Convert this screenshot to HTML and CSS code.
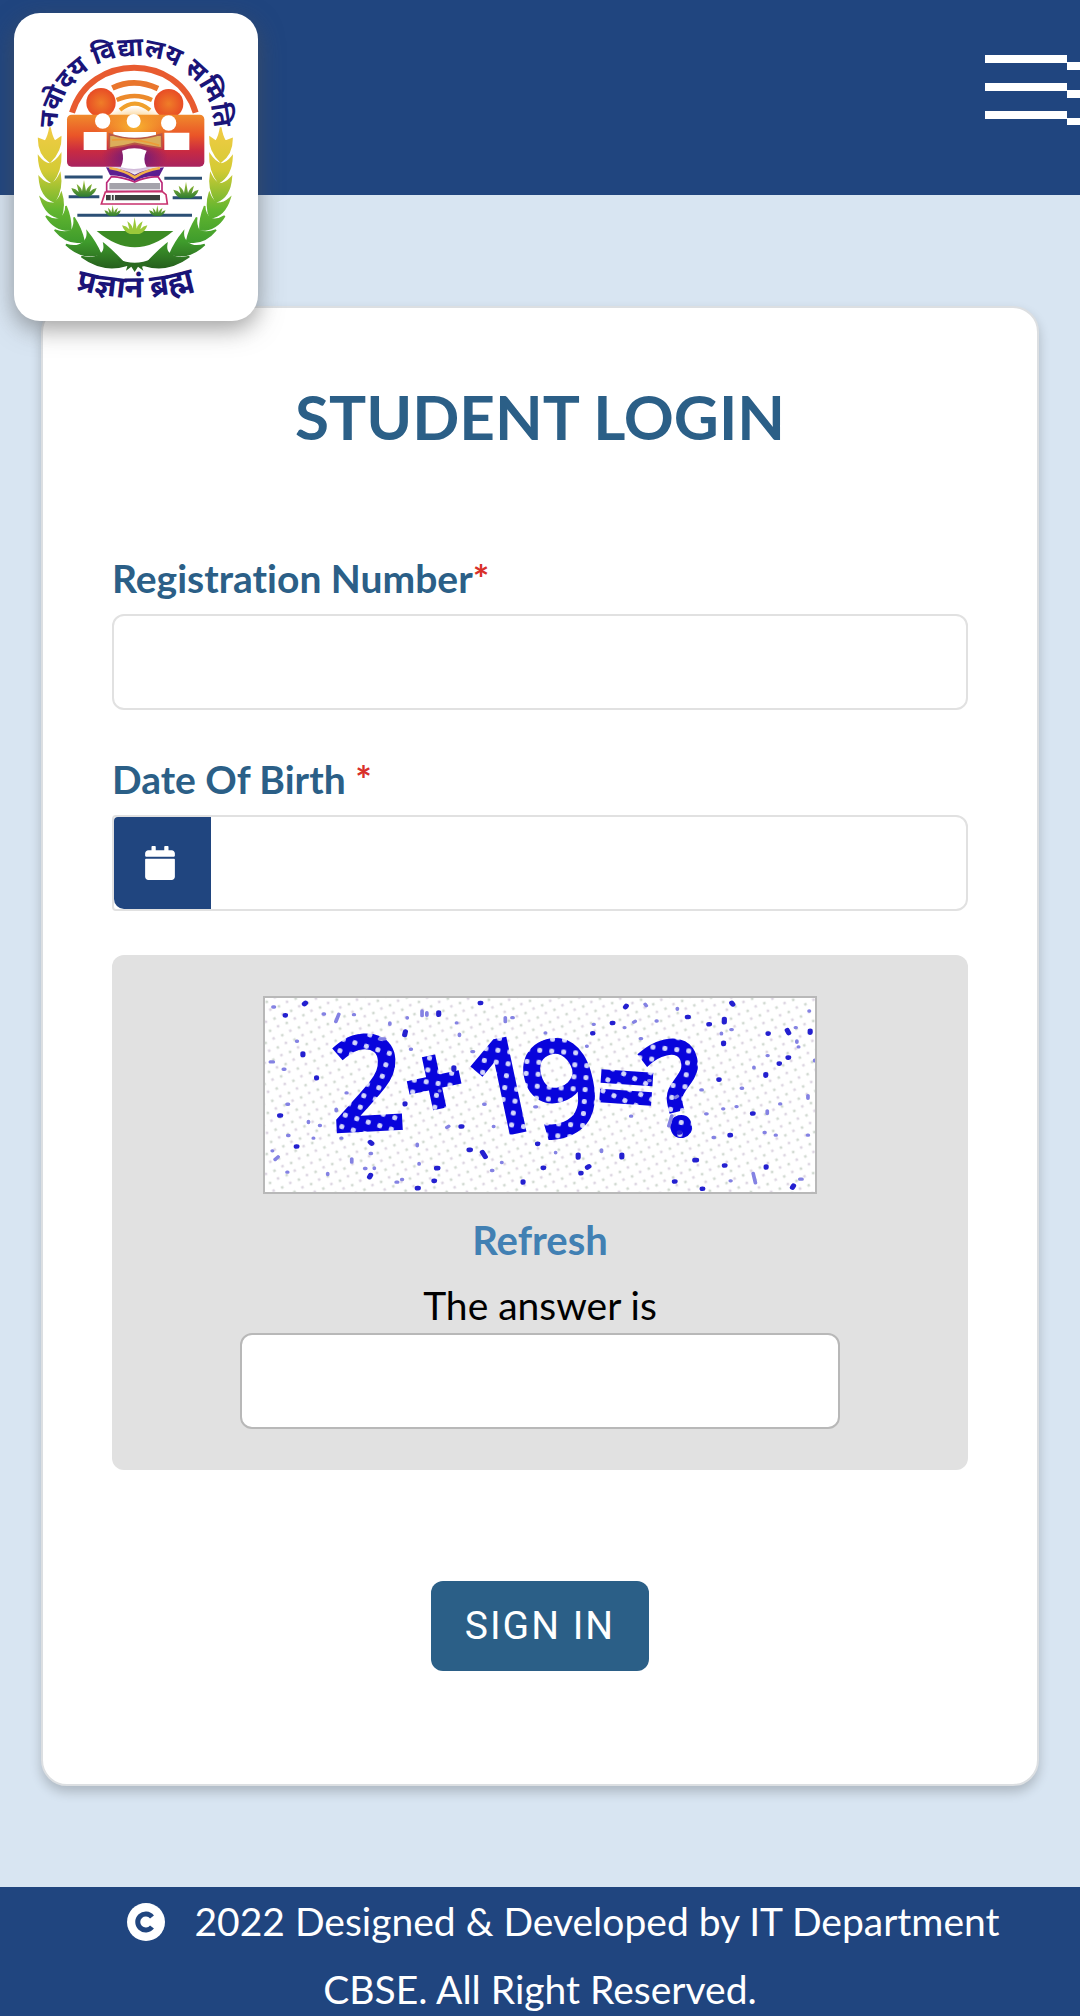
FILE: index.html
```html
<!DOCTYPE html>
<html lang="en">
<head>
  <meta charset="UTF-8" />
  <meta name="viewport" content="width=device-width, initial-scale=1.0"/>
  <title>Student Login</title>
  <link rel="stylesheet" href="styles.css">
</head>
<body>
  <header class="topbar">
    <a class="logo" href="#" aria-label="Home">
      <svg viewBox="42 39 732 924">
        <defs>
          <linearGradient id="fire" x1="0" y1="0" x2="0" y2="1">
            <stop offset="0" stop-color="#f08a2c"/>
            <stop offset=".4" stop-color="#ea5528"/>
            <stop offset=".7" stop-color="#c92a42"/>
            <stop offset="1" stop-color="#a8235f"/>
          </linearGradient>
          <radialGradient id="head">
            <stop offset="0" stop-color="#ef7d28"/>
            <stop offset="1" stop-color="#e84c25"/>
          </radialGradient>
          <radialGradient id="glow">
            <stop offset="0" stop-color="#f7b52f"/>
            <stop offset="1" stop-color="#f7a52f" stop-opacity="0"/>
          </radialGradient>
          <radialGradient id="plum">
            <stop offset="0" stop-color="#5a1685"/>
            <stop offset="1" stop-color="#6a1a80" stop-opacity="0"/>
          </radialGradient>
          <linearGradient id="wheat" gradientUnits="userSpaceOnUse" x1="0" y1="380" x2="0" y2="810">
            <stop offset="0" stop-color="#f2cb45"/>
            <stop offset=".3" stop-color="#d5cb35"/>
            <stop offset=".58" stop-color="#62b62f"/>
            <stop offset=".8" stop-color="#3f9c2c"/>
            <stop offset="1" stop-color="#245c1c"/>
          </linearGradient>
          <linearGradient id="plant" x1="0" y1="0" x2="0" y2="1">
            <stop offset="0" stop-color="#a9c935"/>
            <stop offset="1" stop-color="#2c7a32"/>
          </linearGradient>
          <path id="arcTop" d="M172 400 V378 A234 210 0 0 1 640 378 V400"/>
          <path id="arcBottom" d="M206 862 Q405 926 606 856"/>
          <path id="sprout" d="M-38 -14 Q-24 -12 -16 -2 L-22 -26 Q-8 -16 -6 -4 L0 -38 L6 -4 Q10 -18 24 -26 L17 -2 Q26 -12 38 -14 Q32 6 14 12 H-14 Q-32 6 -38 -14Z"/>
        </defs>

        <text class="motto"><textPath href="#arcTop" startOffset="50%">नवोदय विद्यालय समिति</textPath></text>
        <text class="motto motto-bottom"><textPath href="#arcBottom" startOffset="50%">प्रज्ञानं ब्रह्म</textPath></text>

        <!-- rising sun -->
        <g fill="none">
          <path d="M216 338 C270 158 535 158 587 338" stroke="#e85b30" stroke-width="18"/>
          <path d="M337 264 Q404 232 474 266" stroke="#e9762d" stroke-width="17"/>
          <path d="M350 300 Q404 276 456 300" stroke="#ec8a2b" stroke-width="13"/>
          <path d="M360 330 Q404 292 450 330" stroke="#f0a02c" stroke-width="12"/>
        </g>
        <circle cx="303" cy="308" r="44" fill="url(#head)"/>
        <circle cx="506" cy="311" r="44" fill="url(#head)"/>

        <!-- pupils -->
        <rect x="201" y="344" width="412" height="156" rx="14" fill="url(#fire)"/>
        <ellipse cx="404" cy="380" rx="120" ry="60" fill="url(#glow)"/>
        <ellipse cx="404" cy="470" rx="100" ry="55" fill="url(#plum)"/>
        <g fill="#fff">
          <circle cx="308" cy="363" r="23"/>
          <circle cx="401" cy="363" r="21"/>
          <circle cx="506" cy="369" r="23"/>
          <path d="M251 396 H320 V450 H251Z M493 398 H568 V450 H493Z M340 396 H468 V408 L404 420 L340 408Z"/>
        </g>
        <path d="M328 402 Q370 416 404 416 Q440 416 485 402 V444 Q440 438 404 430 Q370 440 328 444Z" fill="#dcae5a" stroke="#b95a45" stroke-width="5"/>
        <path d="M336 420 Q404 412 478 436" fill="none" stroke="#ed9c36" stroke-width="5"/>

        <!-- books -->
        <path d="M318 502 Q370 506 404 524 Q440 506 492 502 L478 528 Q434 526 404 544 Q372 526 330 526Z" fill="#5a1e90"/>
        <path d="M328 504 Q376 512 404 532 Q434 512 480 504" fill="none" stroke="#f3b24a" stroke-width="8"/>
        <path d="M366 452 Q403 438 440 452 Q426 478 440 502 Q403 512 362 502 Q374 478 366 452Z" fill="#fff"/>
        <path d="M334 530 L320 548 V574 H486 V548 L474 530 Q430 532 404 546 Q372 532 334 530Z" fill="#fff" stroke="#ba2878" stroke-width="5"/>
        <rect x="328" y="549" width="152" height="19" fill="#a5a3ab"/>
        <path d="M316 576 L304 612 H502 L498 584 L486 574Z" fill="#fff" stroke="#c8316d" stroke-width="5"/>
        <path d="M318 585 H480 V601 H318Z" fill="#3c403f"/>
        <path d="M334 585 V601 M343 585 V601" stroke="#e8e8e8" stroke-width="4"/>

        <!-- water and plants -->
        <path d="M194 531 H308 M493 535 H606 M206 590 H298 M518 593 H606 M232 646 H576" fill="none" stroke="#2b4f75" stroke-width="9"/>
        <use href="#sprout" x="252" y="578" fill="url(#plant)"/>
        <use href="#sprout" x="558" y="583" fill="url(#plant)"/>
        <use href="#sprout" transform="translate(338 640) scale(.65)" fill="url(#plant)"/>
        <use href="#sprout" transform="translate(472 640) scale(.65)" fill="url(#plant)"/>
        <path d="M290 693 H520 Q404 790 290 693Z" fill="#3c8b24"/>
        <use href="#sprout" x="404" y="690" fill="#9bc93a"/>

        <!-- wheat wreath -->
        <g fill="url(#wheat)" stroke="url(#wheat)" stroke-width="5" id="earLeft">
          <path d="M150 382 Q154 408 164 424 L182 412 Q184 452 150 486 Q116 462 116 416 L136 424 Q146 408 150 382Z"/>
          <path d="M116 470 Q132 490 148 492 Q168 486 182 464 Q184 510 156 548 Q118 526 116 470Z"/>
          <path d="M118 532 Q136 552 154 552 Q170 544 180 522 Q188 566 164 606 Q122 590 118 532Z"/>
          <path d="M122 594 Q142 612 162 610 Q178 598 184 580 Q196 616 182 654 Q138 648 122 594Z"/>
          <path d="M138 648 Q160 662 180 656 Q198 642 198 618 Q214 656 212 690 Q164 692 138 648Z"/>
          <path d="M164 690 Q192 702 214 692 Q226 676 222 652 Q246 690 252 724 Q202 736 164 690Z"/>
          <path d="M198 734 Q232 744 250 728 Q264 716 262 696 Q288 728 302 762 Q246 780 198 734Z"/>
          <path d="M244 770 Q280 780 302 762 Q316 754 312 732 Q346 760 378 796 Q310 818 244 770Z"/>
        </g>
        <use href="#earLeft" transform="translate(812 0) scale(-1 1)"/>
        <path d="M352 776 Q404 800 456 776 L440 796 L426 800 L430 812 L414 800 L404 816 L394 800 L378 812 L382 798 L366 796Z" fill="#2a6a20"/>
      </svg>
    </a>
    <button class="menu-btn" type="button" aria-label="Menu">
      <svg width="102" height="80" viewBox="0 0 102 80" stroke="#fff" stroke-width="8">
        <path d="M0 14H82M0 42H82M0 70H82"/>
        <path d="M82 21H102M82 49H102M82 77H102"/>
      </svg>
    </button>
  </header>

  <main class="content">
    <form class="card">
      <h1>STUDENT LOGIN</h1>

      <div class="field">
        <label for="regNo">Registration Number<span class="req">*</span></label>
        <input class="text-input" type="text" id="regNo" required>
      </div>

      <div class="field">
        <label for="dob">Date Of Birth <span class="req">*</span></label>
        <div class="date-group">
          <span class="date-icon">
            <svg width="30" height="34" viewBox="0 0 448 512" fill="#fff">
              <path d="M12 192h424c6.600 0 12 5.400 12 12v260c0 26.500-21.500 48-48 48H48c-26.500 0-48-21.500-48-48V204c0-6.600 5.400-12 12-12zm436-44v-36c0-26.500-21.500-48-48-48h-48V12c0-6.600-5.400-12-12-12h-40c-6.600 0-12 5.400-12 12v52H160V12c0-6.600-5.400-12-12-12h-40c-6.600 0-12 5.400-12 12v52H48C21.500 64 0 85.500 0 112v36c0 6.600 5.400 12 12 12h424c6.600 0 12-5.400 12-12z"/>
            </svg>
          </span>
          <input class="date-input" type="text" id="dob" required>
        </div>
      </div>

      <div class="captcha">
        <svg class="captcha-img" viewBox="0 0 550 194" role="img" aria-label="2+19=?">
          <defs>
            <pattern id="paper" width="13" height="13" patternUnits="userSpaceOnUse" patternTransform="rotate(20)">
              <circle cx="3" cy="3" r="1.500" fill="#d2dad2"/>
              <circle cx="9" cy="9" r="1.500" fill="#ddd6e2"/>
            </pattern>
            <pattern id="ink" width="12" height="12" patternUnits="userSpaceOnUse" patternTransform="rotate(20)">
              <rect width="12" height="12" fill="#0804dc"/>
              <rect x="4" y="4" width="5" height="5" rx="2" fill="#d4d6fb"/>
            </pattern>
          </defs>
          <rect width="550" height="194" fill="url(#paper)"/>
          <g class="captcha-text" fill="url(#ink)" stroke="url(#ink)">
            <text transform="translate(69 132) rotate(-3)">2</text>
            <text class="sign" transform="translate(149 124) rotate(-12)">+</text>
            <text transform="translate(214 140) rotate(-12)">1</text>
            <text transform="translate(274 142) rotate(-16)">9</text>
            <text class="sign" transform="translate(331 122) rotate(4)">=</text>
            <text transform="translate(396 140) rotate(-14)">?</text>
          </g>
          <!-- speckles -->
          <g transform="translate(-15 -17) scale(.37 .333)" fill="none" stroke-linecap="round">
            <path stroke="#2420d0" stroke-width="14" d="M95 103h1M147 69l3 -3M622 66h2M510 95v6M420 152l-2 10M143 218v4M180 290v2M125 497h2M325 484l4 4M326 583l-3 6M497 600h2M504 562h4M452 622h3M592 507h4M628 514l8 14M887 522v8M1005 522v7M912 560l4 -3M894 577h1M738 602v3M979 126h2M1240 130h2M1282 114v10M1280 186v3M1302 66l3 4M1015 78l2 -3M1400 158h1M1452 148l4 8M1454 230h2M1430 248h1M1514 150v5M1394 280v4M1358 398h2M1297 463h2M1222 624h2M1395 557v3M1282 554h2M1147 602h2M1202 538h5M1466 620l3 -5M80 404h3M777 489h1M792 561h2M551 260v6M570 437h3M1160 455h2M1267 296h1M419 368v2M926 157h1M1182 108h3"/>
            <path stroke="#8482e3" stroke-width="10" d="M62 78h4M240 100l-8 22M280 101h2M378 126v4M425 110v1M465 90v14M478 95v8M558 126h1M566 160v4M600 212h4M690 110v12M708 110h3M798 156h1M910 196h1M928 130h2M1037 124l4 -3M1098 120h2M1068 70l3 4M1055 173h3M1155 82v3M1274 157v2M1300 146h3M1474 140h2M1478 180v4M1482 198h1M1526 238v2M1398 224h2M1362 259v2M1328 322h3M1508 344v8M1432 369h2M1398 390v8M1314 377h2M1278 384h2M1219 327h3M1078 299h3M1140 405l-8 30M1232 399h3M1390 455h2M1420 463h2M1507 463h2M1360 578l6 28M1298 600h2M1486 595h6M950 507v5M826 515v1M680 545h1M653 569h3M632 370h3M658 437h1M770 378h4M452 490v5M457 548v2M410 596h2M395 604h4M275 534v10M310 563h3M336 561v2M325 518h3M246 472h2M171 472h1M158 422v3M210 578v3M188 434h2M102 464h3M60 510h1M76 528l-8 8M100 574h2M100 370h4M90 265h4M55 243h8M126 181h2M198 99h3M512 330h1M434 205h2M350 174h14M233 385v5M260 336h2M532 440l5 -4M1150 350l5 -4M1029 406h2M1252 470h3M1511 90h1M1012 140h1"/>
          </g>
        </svg>
        <a class="refresh" href="#">Refresh</a>
        <label class="answer-label" for="answer">The answer is</label>
        <input class="text-input answer-input" type="text" id="answer" required>
      </div>

      <button class="signin" type="submit">SIGN IN</button>
    </form>
  </main>

  <footer class="footer">
    <svg class="copy-icon" width="38" height="38" viewBox="0 0 38 38">
      <circle cx="19" cy="19" r="19" fill="#fff"/>
      <path d="M25 14A8 8 0 1 0 25 24" fill="none" stroke="#20457f" stroke-width="5"/>
    </svg>
    2022 Designed &amp; Developed by IT Department CBSE. All Right Reserved.
  </footer>
</body>
</html>
```

FILE: styles.css
```css
* {
  box-sizing: border-box;
}
body {
  margin: 0;
  background: #d8e5f2;
  font-family: Lato, "Liberation Sans", sans-serif;
  font-size: 39px;
  font-variant-ligatures: none;
}
.topbar {
  height: 195px;
  padding: 13px 0 0 14px;
  display: flex;
  justify-content: space-between;
  align-items: flex-start;
  background: #20457f;
}
.logo {
  position: relative;
  width: 244px;
  height: 308px;
  border-radius: 26px;
  background: #fff;
  box-shadow: 0 8px 24px rgba(80,80,80,0.55);
}
.logo svg {
  display: block;
}
.motto {
  font-family: "Noto Sans", "Noto Sans Devanagari", sans-serif;
  font-size: 78px;
  font-weight: bold;
  fill: #1a1478;
  text-anchor: middle;
}
.motto-bottom {
  font-size: 92px;
}
.menu-btn {
  width: 95px;
  margin-top: 32px;
  padding: 0;
  border: none;
  background: none;
  overflow: hidden;
  cursor: pointer;
}
.menu-btn svg {
  display: block;
}
.content {
  padding: 111px 41px 101px;
}
.card {
  display: flex;
  flex-direction: column;
  padding: 69px 69px 113px;
  border: 2px solid #dcdfe2;
  border-radius: 26px;
  background: #fff;
  box-shadow: 0 6px 12px rgba(0,0,0,0.2);
}
h1 {
  margin: 0 0 98px;
  font-size: 62px;
  line-height: 78px;
  font-weight: bold;
  text-align: center;
  color: #2b5f87;
}
.field {
  display: flex;
  flex-direction: column;
  margin-bottom: 44px;
}
.field label {
  line-height: 50px;
  margin-bottom: 11px;
  font-weight: bold;
  color: #2b5f87;
}
.field .req {
  color: #d9302a;
}
.text-input, .date-group {
  height: 96px;
  border: 2px solid #e1e1e1;
  border-radius: 12px;
  background: #fff;
}
.text-input, .date-input {
  font: inherit;
  padding: 0 24px;
  outline: none;
}
.date-group {
  display: flex;
  border-top-left-radius: 4px;
  border-bottom-left-radius: 4px;
}
.date-icon {
  width: 97px;
  display: flex;
  align-items: center;
  padding-left: 31px;
  border-radius: 4px 0 0 10px;
  background: #20457f;
}
.date-input {
  flex: 1;
  min-width: 0;
  border: none;
  background: none;
}
.captcha {
  display: flex;
  flex-direction: column;
  align-items: center;
  padding: 41px 20px;
  border-radius: 12px;
  background: #e1e1e1;
}
.captcha-img {
  width: 554px;
  height: 198px;
  border: 2px solid #b8b8b8;
  background: #fff;
}
.captcha-text {
  font-family: "Open Sans", sans-serif;
  font-size: 126px;
  stroke-width: 7px;
}
.captcha-text .sign {
  font-size: 98px;
}
.refresh {
  margin-top: 13px;
  font-size: 40px;
  line-height: 66px;
  font-weight: bold;
  color: #4180b3;
  text-decoration: none;
}
.answer-label {
  margin-top: 4px;
  line-height: 56px;
  color: #000;
}
.answer-input {
  width: 600px;
  max-width: 100%;
  border-color: #b8b8b8;
}
.signin {
  align-self: center;
  height: 90px;
  margin-top: 111px;
  padding: 0 34px;
  border: none;
  border-radius: 12px;
  background: #2b5f87;
  color: #fff;
  font-family: Roboto, sans-serif;
  font-size: 39px;
  letter-spacing: 2px;
  cursor: pointer;
}
.footer {
  padding: 0 70px;
  line-height: 68px;
  text-align: center;
  color: #fff;
  background: #20457f;
}
.copy-icon {
  margin: 0 20px 0 46px;
  vertical-align: -5px;
}
```
